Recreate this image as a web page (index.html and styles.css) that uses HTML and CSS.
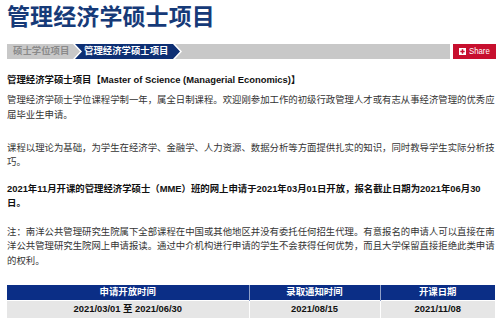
FILE: index.html
```html
<!DOCTYPE html>
<html lang="zh-CN">
<head>
<meta charset="utf-8">
<title>管理经济学硕士项目</title>
<link rel="stylesheet" href="styles.css">
</head>
<body>
<div class="page">
  <h1 class="title">管理经济学硕士项目</h1>
  <div class="crumbbar">
    <div class="crumbs">
      <span class="crumb-home">硕士学位项目</span>
      <span class="crumb-edge"><span class="crumb-current">管理经济学硕士项目</span></span>
    </div>
    <a class="share" href="#">
      <svg class="share-icon" width="7" height="7" viewBox="0 0 7 7"><rect width="7" height="7" fill="#fff"/><path d="M3.5 1.3v4.4M1.3 3.5h4.4" stroke="#c70f2e" stroke-width="1.5"/></svg>
      <span class="share-label">Share</span>
    </a>
  </div>
  <p class="lead">管理经济学硕士项目【Master of Science (Managerial Economics)】</p>
  <p class="p1">管理经济学硕士学位课程学制一年，属全日制课程。欢迎刚参加工作的初级行政管理人才或有志从事经济管理的优秀应届毕业生申请。</p>
  <p class="p2">课程以理论为基础，为学生在经济学、金融学、人力资源、数据分析等方面提供扎实的知识，同时教导学生实际分析技巧。</p>
  <p class="p3">2021年11月开课的管理经济学硕士（MME）班的网上申请于2021年03月01日开放，报名截止日期为2021年06月30日。</p>
  <p class="p4">注：南洋公共管理研究生院属下全部课程在中国或其他地区并没有委托任何招生代理。有意报名的申请人可以直接在南洋公共管理研究生院网上申请报读。通过中介机构进行申请的学生不会获得任何优势，而且大学保留直接拒绝此类申请的权利。</p>
  <table class="dates">
    <thead>
      <tr><th class="c1">申请开放时间</th><th class="c2">录取通知时间</th><th class="c3">开课日期</th></tr>
    </thead>
    <tbody>
      <tr><td>2021/03/01 至 2021/06/30</td><td>2021/08/15</td><td>2021/11/08</td></tr>
    </tbody>
  </table>
</div>
</body>
</html>
```

FILE: styles.css
```css
* { box-sizing: border-box; }
body {
  margin: 0;
  font-family: "Liberation Sans", "Noto Sans CJK SC", sans-serif;
  font-size: 9.38px;
  line-height: 14.4px;
  color: #333;
  background: #fff;
}
.page {
  padding: 0 4px 0 7px;
}
.title {
  margin: 4px 0 0;
  font-size: 23px;
  line-height: 26px;
  font-weight: 700;
  color: #163a78;
  letter-spacing: 0.1px;
}
.crumbbar {
  margin-top: 14px;
  height: 15px;
  display: flex;
  gap: 3px;
}
.crumbs {
  flex: 1;
  display: flex;
  background: #c8c8c8;
  height: 15px;
}
.crumb-home {
  width: 66px;
  padding-left: 6px;
  color: #8a8a8a;
  font-weight: 700;
  line-height: 15px;
}
.crumb-edge {
  display: flex;
  width: 109px;
  height: 15px;
  background: #fff;
  clip-path: polygon(0 0, calc(100% - 7px) 0, 100% 50%, calc(100% - 7px) 100%, 0 100%, 7px 50%);
}
.crumb-current {
  margin-left: 2px;
  width: 105px;
  height: 15px;
  background: #0d2f73;
  color: #fff;
  font-weight: 700;
  line-height: 15px;
  padding-left: 9px;
  clip-path: polygon(0 0, calc(100% - 7px) 0, 100% 50%, calc(100% - 7px) 100%, 0 100%, 7px 50%);
}
.share {
  width: 43px;
  height: 15px;
  background: #c70f2e;
  color: #fff;
  text-decoration: none;
  display: flex;
  align-items: center;
  gap: 3px;
  padding-left: 6px;
  overflow: hidden;
  font-family: "Liberation Sans", sans-serif;
  font-size: 9.5px;
}
.share-icon { display: block; flex: none; }
.share-label {
  display: inline-block;
  transform: scaleX(0.82);
  transform-origin: left center;
}
p { margin: 0; }
.lead {
  margin-top: 14px;
  font-weight: 700;
  color: #111;
}
.p1 { margin-top: 6px; }
.p2 { margin-top: 18.6px; }
.p3 {
  margin-top: 12.4px;
  font-weight: 700;
  color: #111;
}
.p4 { margin-top: 14px; }
.dates {
  margin-top: 17px;
  width: 488px;
  border-collapse: collapse;
  table-layout: fixed;
  font-weight: 700;
}
.dates th {
  background: #0b2e86;
  color: #fff;
  height: 15px;
  padding: 0;
  line-height: 15px;
  text-align: center;
}
.dates th + th { border-left: 1px solid #8fa0c8; }
.c1 { width: 242px; }
.c2 { width: 131px; }
.c3 { width: 115px; }
.dates td {
  background: #e6e6e6;
  color: #111;
  height: 17px;
  padding: 0;
  text-align: center;
  border-top: 1px solid #fff;
}
.dates td + td { border-left: 1px solid #fff; }
```
